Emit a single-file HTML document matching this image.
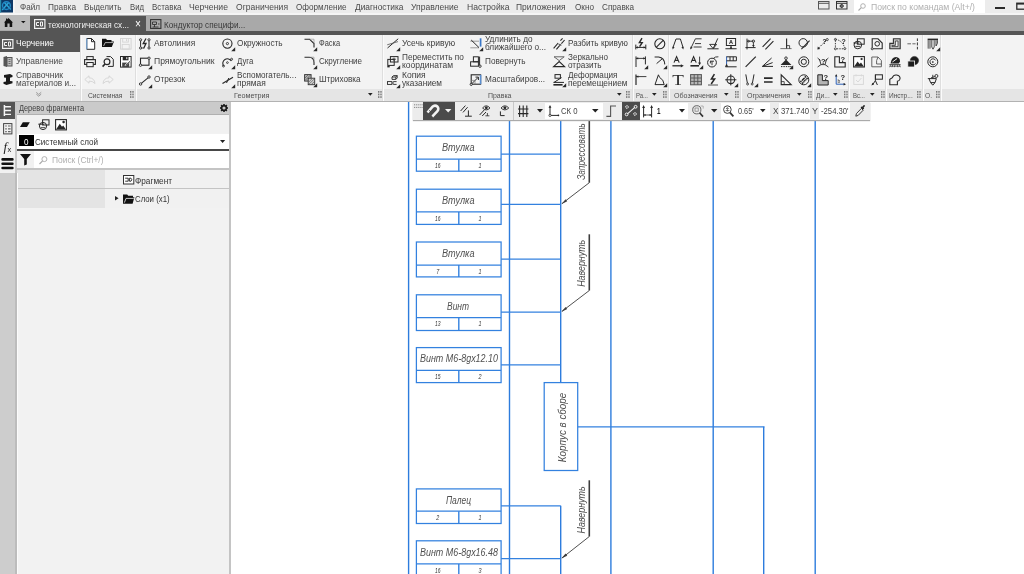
<!DOCTYPE html><html lang="ru"><head><meta charset="utf-8"><title>КОМПАС-3D</title><style>html,body{margin:0;padding:0;}body{width:1024px;height:574px;position:relative;overflow:hidden;background:#fff;font-family:"Liberation Sans", sans-serif;}div,span.t,svg{position:absolute;}span.t{white-space:nowrap;transform-origin:0 0;line-height:1;}svg{overflow:visible;}</style></head><body>
<div style="left:0px;top:0px;width:1024px;height:15px;background:#ececec;"></div>
<div style="left:0px;top:13px;width:1024px;height:2px;background:#f5f5f5;"></div>
<div style="left:0px;top:15px;width:1024px;height:16px;background:#a9a9a9;"></div>
<div style="left:0px;top:15px;width:30px;height:15.2px;background:#bababa;"></div>
<div style="left:30px;top:16px;width:116px;height:15px;background:#555555;"></div>
<div style="left:0px;top:31px;width:1024px;height:4px;background:#555555;"></div>
<div style="left:0px;top:35px;width:1024px;height:53.5px;background:#f3f3f3;"></div>
<div style="left:0px;top:88.5px;width:1024px;height:12.5px;background:#e5e5e5;"></div>
<div style="left:0px;top:35px;width:80px;height:17px;background:#555555;"></div>
<div style="left:0px;top:100.6px;width:1024px;height:1.2px;background:#b2b2b2;"></div>
<div style="left:79.5px;top:35px;width:1px;height:65.5px;background:#dedede;"></div>
<div style="left:80.5px;top:35px;width:1px;height:65.5px;background:#fbfbfb;"></div>
<div style="left:134.6px;top:35px;width:1px;height:65.5px;background:#dedede;"></div>
<div style="left:135.6px;top:35px;width:1px;height:65.5px;background:#fbfbfb;"></div>
<div style="left:382px;top:35px;width:1px;height:65.5px;background:#dedede;"></div>
<div style="left:383px;top:35px;width:1px;height:65.5px;background:#fbfbfb;"></div>
<div style="left:631.5px;top:35px;width:1px;height:65.5px;background:#dedede;"></div>
<div style="left:632.5px;top:35px;width:1px;height:65.5px;background:#fbfbfb;"></div>
<div style="left:667.8px;top:35px;width:1px;height:65.5px;background:#dedede;"></div>
<div style="left:668.8px;top:35px;width:1px;height:65.5px;background:#fbfbfb;"></div>
<div style="left:739.5px;top:35px;width:1px;height:65.5px;background:#dedede;"></div>
<div style="left:740.5px;top:35px;width:1px;height:65.5px;background:#fbfbfb;"></div>
<div style="left:811.5px;top:35px;width:1px;height:65.5px;background:#dedede;"></div>
<div style="left:812.5px;top:35px;width:1px;height:65.5px;background:#fbfbfb;"></div>
<div style="left:848.2px;top:35px;width:1px;height:65.5px;background:#dedede;"></div>
<div style="left:849.2px;top:35px;width:1px;height:65.5px;background:#fbfbfb;"></div>
<div style="left:885px;top:35px;width:1px;height:65.5px;background:#dedede;"></div>
<div style="left:886px;top:35px;width:1px;height:65.5px;background:#fbfbfb;"></div>
<div style="left:921.5px;top:35px;width:1px;height:65.5px;background:#dedede;"></div>
<div style="left:922.5px;top:35px;width:1px;height:65.5px;background:#fbfbfb;"></div>
<div style="left:940px;top:35px;width:1px;height:65.5px;background:#dedede;"></div>
<div style="left:941px;top:35px;width:1px;height:65.5px;background:#fbfbfb;"></div>
<div style="left:854px;top:0px;width:130.5px;height:12.7px;background:#ffffff;"></div>
<div style="left:231px;top:101.5px;width:793px;height:472.5px;background:#ffffff;"></div>
<div style="left:0px;top:101.5px;width:16px;height:71.5px;background:#f1f1f1;"></div>
<div style="left:0px;top:173px;width:16px;height:401px;background:#cdcdcd;"></div>
<div style="left:0px;top:101.5px;width:16px;height:17px;background:#555555;"></div>
<div style="left:16px;top:101.5px;width:214px;height:472.5px;background:#f2f2f2;"></div>
<div style="left:16px;top:101.5px;width:214px;height:12.7px;background:#cacaca;"></div>
<div style="left:16px;top:114px;width:214px;height:1.2px;background:#b0b0b0;"></div>
<div style="left:16px;top:115.2px;width:214px;height:18.3px;background:#f1f1f1;"></div>
<div style="left:16px;top:133.5px;width:214px;height:15px;background:#ffffff;"></div>
<div style="left:18.5px;top:135px;width:15px;height:10.6px;background:#000000;"></div>
<div style="left:16px;top:148.5px;width:214px;height:2px;background:#484848;"></div>
<div style="left:16px;top:150.5px;width:214px;height:17.5px;background:#ffffff;"></div>
<div style="left:16px;top:150.5px;width:17.5px;height:17.5px;background:#f1f1f1;"></div>
<div style="left:16px;top:168px;width:214px;height:1.5px;background:#c4c4c4;"></div>
<div style="left:16px;top:169.5px;width:214px;height:18px;background:#f1f1f1;"></div>
<div style="left:16px;top:169.5px;width:89px;height:18px;background:#e4e4e4;"></div>
<div style="left:16px;top:187.5px;width:214px;height:1.5px;background:#c4c4c4;"></div>
<div style="left:16px;top:189px;width:214px;height:18.5px;background:#f1f1f1;"></div>
<div style="left:16px;top:189px;width:89px;height:18.5px;background:#e4e4e4;"></div>
<div style="left:15.4px;top:101.5px;width:1.2px;height:71.5px;background:#c8c8c8;"></div>
<div style="left:15px;top:173px;width:2px;height:401px;background:#bcbcbc;"></div>
<div style="left:17px;top:173px;width:1px;height:401px;background:#fbfbfb;"></div>
<div style="left:229.3px;top:101.5px;width:1.5px;height:472.5px;background:#c4c4c4;"></div>
<div style="left:13px;top:0px;width:1.5px;height:13px;background:#f4f4f4;"></div>
<div style="left:995px;top:7px;width:9.5px;height:1.6px;background:#2a2a2a;"></div>
<svg style="left:0;top:0;will-change:transform" width="1024" height="574" viewBox="0 0 1024 574" font-family="Liberation Sans, sans-serif"><line x1="408.6" y1="102" x2="408.6" y2="574" stroke="#2d7cdd" stroke-width="1.4"/><line x1="509.5" y1="102" x2="509.5" y2="574" stroke="#2d7cdd" stroke-width="1.4"/><line x1="610.9" y1="102" x2="610.9" y2="574" stroke="#2d7cdd" stroke-width="1.4"/><line x1="713.2" y1="102" x2="713.2" y2="574" stroke="#2d7cdd" stroke-width="1.4"/><line x1="815.2" y1="102" x2="815.2" y2="574" stroke="#2d7cdd" stroke-width="1.4"/><line x1="560.7" y1="102" x2="560.7" y2="382.6" stroke="#2d7cdd" stroke-width="1.4"/><line x1="560.7" y1="505.8" x2="560.7" y2="574" stroke="#2d7cdd" stroke-width="1.4"/><line x1="763.7" y1="426.8" x2="763.7" y2="574" stroke="#2d7cdd" stroke-width="1.4"/><line x1="577.7" y1="426.8" x2="764.5" y2="426.8" stroke="#3381df" stroke-width="1.25"/><rect x="416.4" y="136.2" width="84.7" height="35.0" fill="none" stroke="#3381df" stroke-width="1.25"/><line x1="416.4" y1="159.2" x2="501.1" y2="159.2" stroke="#3381df" stroke-width="1.25"/><line x1="458.8" y1="159.2" x2="458.8" y2="171.2" stroke="#3381df" stroke-width="1.4"/><line x1="501.1" y1="154.0" x2="560.7" y2="154.0" stroke="#3381df" stroke-width="1.25"/><text x="442" y="150.89999999999998" font-size="11" font-style="italic" fill="#505050" textLength="32.5" lengthAdjust="spacingAndGlyphs">Втулка</text><text x="435.05" y="168.0" font-size="8" font-style="italic" fill="#333" textLength="5.5" lengthAdjust="spacingAndGlyphs">16</text><text x="478.6" y="168.0" font-size="8" font-style="italic" fill="#333" textLength="3" lengthAdjust="spacingAndGlyphs">1</text><rect x="416.4" y="189.2" width="84.7" height="35.20000000000002" fill="none" stroke="#3381df" stroke-width="1.25"/><line x1="416.4" y1="211.9" x2="501.1" y2="211.9" stroke="#3381df" stroke-width="1.25"/><line x1="458.8" y1="211.9" x2="458.8" y2="224.4" stroke="#3381df" stroke-width="1.4"/><line x1="501.1" y1="204.4" x2="560.7" y2="204.4" stroke="#3381df" stroke-width="1.25"/><text x="442" y="203.89999999999998" font-size="11" font-style="italic" fill="#505050" textLength="32.5" lengthAdjust="spacingAndGlyphs">Втулка</text><text x="435.05" y="220.70000000000002" font-size="8" font-style="italic" fill="#333" textLength="5.5" lengthAdjust="spacingAndGlyphs">16</text><text x="478.6" y="220.70000000000002" font-size="8" font-style="italic" fill="#333" textLength="3" lengthAdjust="spacingAndGlyphs">1</text><rect x="416.4" y="242.0" width="84.7" height="34.89999999999998" fill="none" stroke="#3381df" stroke-width="1.25"/><line x1="416.4" y1="265.0" x2="501.1" y2="265.0" stroke="#3381df" stroke-width="1.25"/><line x1="458.8" y1="265.0" x2="458.8" y2="276.9" stroke="#3381df" stroke-width="1.4"/><line x1="501.1" y1="259.2" x2="560.7" y2="259.2" stroke="#3381df" stroke-width="1.25"/><text x="442" y="256.7" font-size="11" font-style="italic" fill="#505050" textLength="32.5" lengthAdjust="spacingAndGlyphs">Втулка</text><text x="436.3" y="273.8" font-size="8" font-style="italic" fill="#333" textLength="3" lengthAdjust="spacingAndGlyphs">7</text><text x="478.6" y="273.8" font-size="8" font-style="italic" fill="#333" textLength="3" lengthAdjust="spacingAndGlyphs">1</text><rect x="416.4" y="294.8" width="84.7" height="35.69999999999999" fill="none" stroke="#3381df" stroke-width="1.25"/><line x1="416.4" y1="317.5" x2="501.1" y2="317.5" stroke="#3381df" stroke-width="1.25"/><line x1="458.8" y1="317.5" x2="458.8" y2="330.5" stroke="#3381df" stroke-width="1.4"/><line x1="501.1" y1="312.1" x2="560.7" y2="312.1" stroke="#3381df" stroke-width="1.25"/><text x="447" y="309.5" font-size="11" font-style="italic" fill="#505050" textLength="22" lengthAdjust="spacingAndGlyphs">Винт</text><text x="435.05" y="326.3" font-size="8" font-style="italic" fill="#333" textLength="5.5" lengthAdjust="spacingAndGlyphs">13</text><text x="478.6" y="326.3" font-size="8" font-style="italic" fill="#333" textLength="3" lengthAdjust="spacingAndGlyphs">1</text><rect x="416.4" y="347.6" width="84.7" height="35.0" fill="none" stroke="#3381df" stroke-width="1.25"/><line x1="416.4" y1="370.3" x2="501.1" y2="370.3" stroke="#3381df" stroke-width="1.25"/><line x1="458.8" y1="370.3" x2="458.8" y2="382.6" stroke="#3381df" stroke-width="1.4"/><line x1="501.1" y1="364.9" x2="560.7" y2="364.9" stroke="#3381df" stroke-width="1.25"/><text x="420" y="362.3" font-size="11" font-style="italic" fill="#505050" textLength="78" lengthAdjust="spacingAndGlyphs">Винт М6-8gх12.10</text><text x="435.05" y="379.1" font-size="8" font-style="italic" fill="#333" textLength="5.5" lengthAdjust="spacingAndGlyphs">15</text><text x="478.6" y="379.1" font-size="8" font-style="italic" fill="#333" textLength="3" lengthAdjust="spacingAndGlyphs">2</text><rect x="416.4" y="488.9" width="84.7" height="34.60000000000002" fill="none" stroke="#3381df" stroke-width="1.25"/><line x1="416.4" y1="511.2" x2="501.1" y2="511.2" stroke="#3381df" stroke-width="1.25"/><line x1="458.8" y1="511.2" x2="458.8" y2="523.5" stroke="#3381df" stroke-width="1.4"/><line x1="501.1" y1="505.8" x2="560.7" y2="505.8" stroke="#3381df" stroke-width="1.25"/><text x="446" y="503.59999999999997" font-size="11" font-style="italic" fill="#505050" textLength="25" lengthAdjust="spacingAndGlyphs">Палец</text><text x="436.3" y="520.0" font-size="8" font-style="italic" fill="#333" textLength="3" lengthAdjust="spacingAndGlyphs">2</text><text x="478.6" y="520.0" font-size="8" font-style="italic" fill="#333" textLength="3" lengthAdjust="spacingAndGlyphs">1</text><rect x="416.4" y="540.8" width="84.7" height="39.200000000000045" fill="none" stroke="#3381df" stroke-width="1.25"/><line x1="416.4" y1="563.9" x2="501.1" y2="563.9" stroke="#3381df" stroke-width="1.25"/><line x1="458.8" y1="563.9" x2="458.8" y2="580" stroke="#3381df" stroke-width="1.4"/><line x1="501.1" y1="558.7" x2="560.7" y2="558.7" stroke="#3381df" stroke-width="1.25"/><text x="420" y="555.5" font-size="11" font-style="italic" fill="#505050" textLength="78" lengthAdjust="spacingAndGlyphs">Винт М6-8gх16.48</text><text x="435.05" y="572.6999999999999" font-size="8" font-style="italic" fill="#333" textLength="5.5" lengthAdjust="spacingAndGlyphs">16</text><text x="478.6" y="572.6999999999999" font-size="8" font-style="italic" fill="#333" textLength="3" lengthAdjust="spacingAndGlyphs">3</text><rect x="544.2" y="382.6" width="33.5" height="87.9" fill="#fff" stroke="#3381df" stroke-width="1.25"/><text transform="translate(566,462.2) rotate(-90)" font-size="11.5" font-style="italic" fill="#505050" textLength="69.5" lengthAdjust="spacingAndGlyphs">Корпус в сборе</text><line x1="589.3" y1="102" x2="589.3" y2="182.7" stroke="#3c3c3c" stroke-width="1.6"/><line x1="589.3" y1="182.7" x2="562" y2="203.6" stroke="#3c3c3c" stroke-width="0.9"/><path d="M561.3 204.2 L567.2 201.29999999999998 L565.6 199.2 Z" fill="#3c3c3c"/><text transform="translate(585.2,179.8) rotate(-90)" font-size="11.5" font-style="italic" fill="#505050" textLength="56.5" lengthAdjust="spacingAndGlyphs">Запрессовать</text><line x1="589.3" y1="234.3" x2="589.3" y2="290.5" stroke="#3c3c3c" stroke-width="1.6"/><line x1="589.3" y1="290.5" x2="562" y2="311.3" stroke="#3c3c3c" stroke-width="0.9"/><path d="M561.3 311.90000000000003 L567.2 309.0 L565.6 306.90000000000003 Z" fill="#3c3c3c"/><text transform="translate(585.2,286.8) rotate(-90)" font-size="11.5" font-style="italic" fill="#505050" textLength="47" lengthAdjust="spacingAndGlyphs">Навернуть</text><line x1="589.3" y1="480.3" x2="589.3" y2="536.5" stroke="#3c3c3c" stroke-width="1.6"/><line x1="589.3" y1="536.5" x2="562" y2="558.0" stroke="#3c3c3c" stroke-width="0.9"/><path d="M561.3 558.6 L567.2 555.7 L565.6 553.6 Z" fill="#3c3c3c"/><text transform="translate(585.2,533.4) rotate(-90)" font-size="11.5" font-style="italic" fill="#505050" textLength="47" lengthAdjust="spacingAndGlyphs">Навернуть</text></svg>
<div style="left:412.5px;top:101.5px;width:457.5px;height:18px;background:#ececec;box-shadow:0 1px 1px #aaa;"></div>
<div style="left:423px;top:101.5px;width:32px;height:18px;background:#4b4b4b;"></div>
<div style="left:512.5px;top:101.5px;width:1px;height:18px;background:#c8c8c8;"></div>
<div style="left:545px;top:102.5px;width:57.5px;height:16px;background:#ffffff;"></div>
<div style="left:622px;top:101.5px;width:18px;height:18px;background:#4b4b4b;"></div>
<div style="left:640px;top:102.5px;width:48px;height:16px;background:#ffffff;"></div>
<div style="left:721px;top:102.5px;width:49px;height:16px;background:#ffffff;"></div>
<div style="left:779px;top:102.5px;width:31px;height:16px;background:#ffffff;"></div>
<div style="left:819px;top:102.5px;width:31px;height:16px;background:#ffffff;"></div>
<svg style="left:413.5px;top:104px" width="9" height="5" viewBox="0 0 9 5"><path d="M0 0.8 H9 M0 3.4 H9" stroke="#777" stroke-width="0.9" fill="none" stroke-dasharray="1.2 0.9"/></svg>
<svg style="left:425.5px;top:104px" width="13" height="13.5" viewBox="0 0 13 13.5"><path d="M1.5 8.5 L6.6 2.6 A3.3 3.3 0 0 1 11.4 7.2 L6.2 12.6" stroke="#f4f4f4" stroke-width="2.6" fill="none" /><path d="M3.2 6.4 L5.6 8.4 M3.6 10.6 L6.4 12.8" stroke="#4b4b4b" stroke-width="1.0" fill="none" /><path d="M4.6 9.6 L8.4 5.4" stroke="#4b4b4b" stroke-width="1.2" fill="none" /></svg>
<svg style="left:445px;top:108.6px" width="6.4" height="3.4" viewBox="0 0 6.4 3.4"><path d="M0 0 H6.4 L3.2 3.4 Z" fill="#f4f4f4"/></svg>
<svg style="left:460px;top:104.5px" width="12.5" height="12.5" viewBox="0 0 12.5 12.5"><path d="M0.6 6 L5.4 0.6 M3 7.4 L7.6 2.2" stroke="#282828" stroke-width="1.0" fill="none" /><path d="M8.4 5.4 V11 M5 11.2 H11.8" stroke="#282828" stroke-width="1.0" fill="none" /></svg>
<svg style="left:479px;top:104px" width="12" height="13" viewBox="0 0 12 13"><path d="M0.6 11 L5.6 5.6 M3.2 12 L7 8" stroke="#282828" stroke-width="1.0" fill="none" /><path d="M3.6 4 Q7.2 -0.4 11 4 Q7.2 7.8 3.6 4 Z" stroke="#282828" stroke-width="0.9" fill="none" /><circle cx="7.3" cy="3.8" r="1.4" stroke="#282828" stroke-width="0.1" fill="#282828"/><path d="M6.4 11.8 H10.4 M8.4 9 V11.8" stroke="#282828" stroke-width="0.8" fill="none" /></svg>
<svg style="left:498.5px;top:104px" width="11" height="13" viewBox="0 0 11 13"><path d="M2 4 Q5.8 -0.4 9.8 4 Q5.8 7.8 2 4 Z" stroke="#282828" stroke-width="0.9" fill="none" /><circle cx="5.9" cy="3.8" r="1.4" stroke="#282828" stroke-width="0.1" fill="#282828"/><path d="M1.4 7.4 V11.6 H5.6" stroke="#282828" stroke-width="1.0" fill="none" /></svg>
<svg style="left:518px;top:104.5px" width="10.5" height="12.5" viewBox="0 0 10.5 12.5"><path d="M1.6 0.4 V12 M5.2 0.4 V12 M8.8 0.4 V12 M0 4 H10.4 M0 8.6 H10.4" stroke="#282828" stroke-width="1.1" fill="none" /></svg>
<svg style="left:537px;top:109px" width="6" height="3.4" viewBox="0 0 6 3.4"><path d="M0 0 H6 L3 3.4 Z" fill="#222"/></svg>
<svg style="left:548px;top:104.5px" width="11.5" height="12.5" viewBox="0 0 11.5 12.5"><path d="M2 1.6 V10.4 H10" stroke="#282828" stroke-width="1.0" fill="none" /><path d="M2 0 L0.6 2.8 H3.4 Z" fill="#282828"/><circle cx="2" cy="10.4" r="1.1" stroke="#282828" stroke-width="0.8" fill="#fff"/><circle cx="10.4" cy="10.4" r="0.8" stroke="#282828" stroke-width="0.1" fill="#282828"/></svg>
<svg style="left:592px;top:109px" width="6.6" height="3.6" viewBox="0 0 6.6 3.6"><path d="M0 0 H6.6 L3.3 3.6 Z" fill="#222"/></svg>
<svg style="left:606px;top:104.5px" width="10.5" height="12.5" viewBox="0 0 10.5 12.5"><path d="M0.4 11.4 H4.6 V1 H10" stroke="#555" stroke-width="1.1" fill="none" /></svg>
<svg style="left:624px;top:104px" width="14.5" height="13" viewBox="0 0 14.5 13"><path d="M3.4 9.8 L10.8 3.4" stroke="#f4f4f4" stroke-width="1.1" fill="none" /><circle cx="2.6" cy="10.4" r="1.4" stroke="#f4f4f4" stroke-width="1.0" fill="none"/><circle cx="11.6" cy="2.8" r="1.4" stroke="#f4f4f4" stroke-width="1.0" fill="none"/><path d="M3 1.4 L4.6 3 L3 4.6 L1.4 3 Z M11 8.4 L12.6 10 L11 11.6 L9.4 10 Z" stroke="#f4f4f4" stroke-width="0.9" fill="none" /></svg>
<svg style="left:642px;top:104.5px" width="11.5" height="13" viewBox="0 0 11.5 13"><path d="M1.6 2 V12.4 M9.6 2 V12.4" stroke="#282828" stroke-width="1.0" fill="none" /><path d="M1.6 0 L0.2 3 H3 Z M9.6 0 L8.2 3 H11 Z" fill="#282828"/><path d="M1.6 10 H9.6" stroke="#282828" stroke-width="0.8" fill="none" /><path d="M1.6 10 L3.6 9 V11 Z M9.6 10 L7.6 9 V11 Z" fill="#282828"/></svg>
<svg style="left:678.8px;top:109px" width="6" height="3.4" viewBox="0 0 6 3.4"><path d="M0 0 H6 L3 3.4 Z" fill="#222"/></svg>
<svg style="left:692px;top:104.5px" width="12" height="12.5" viewBox="0 0 12 12.5"><circle cx="4.8" cy="4.8" r="4.1" stroke="#555" stroke-width="0.9" fill="none"/><path d="M7.6 7.8 L11 11.6" stroke="#333" stroke-width="1.7" fill="none" /><rect x="3" y="3" width="3.2" height="3.2" stroke="#777" stroke-width="0.7" fill="none"/><path d="M8.6 1 h2.6 v2.6" stroke="#999" stroke-width="0.7" fill="none" /></svg>
<svg style="left:711px;top:109px" width="6.4" height="3.4" viewBox="0 0 6.4 3.4"><path d="M0 0 H6.4 L3.2 3.4 Z" fill="#222"/></svg>
<svg style="left:722.5px;top:104.5px" width="11" height="12.5" viewBox="0 0 11 12.5"><circle cx="4.4" cy="4.6" r="3.8" stroke="#444" stroke-width="1.0" fill="none"/><path d="M7 7.6 L10.4 11.4" stroke="#333" stroke-width="1.7" fill="none" /><path d="M2.6 5.6 H6.4 M4.4 2.6 V6.4 M3 4 L4.4 2.6 L5.8 4" stroke="#444" stroke-width="0.7" fill="none" /></svg>
<svg style="left:760.4px;top:109px" width="5.6" height="3.2" viewBox="0 0 5.6 3.2"><path d="M0 0 H5.6 L2.8 3.2 Z" fill="#222"/></svg>
<svg style="left:855px;top:104px" width="10.5" height="13" viewBox="0 0 10.5 13"><path d="M0.8 12.2 L1.4 9.6 L6.4 4.4 L8.2 6.2 L3.2 11.4 Z" stroke="#282828" stroke-width="0.9" fill="none" /><path d="M5.6 3.6 L7 2.2 L7.6 2.8 Q8.2 0.4 9.6 1 Q10.6 2.2 8.6 3.8 L9.2 4.4 L7.8 5.8 Z" fill="#282828"/></svg>
<div id="txt" style="left:0;top:0;width:1024px;height:574px;will-change:transform;"><svg style="left:0px;top:0px;" width="13" height="12.5" viewBox="0 0 13 12.5"><rect width="13" height="12.5" fill="#0d3866"/><rect width="1.2" height="12.5" fill="#2a8fb0"/><path d="M2.2 10 L8.8 2.4 M4.4 2.6 L10.8 9.6" stroke="#2ba3d6" stroke-width="1.5" fill="none" /><circle cx="6.4" cy="5.6" r="3.9" stroke="#2288c4" stroke-width="1.4" fill="none"/></svg>
<svg style="left:3.5px;top:18.2px;" width="9" height="9" viewBox="0 0 9 9"><path d="M0 4.5 L2 2.2 L2 0.6 L3.2 0.6 L3.2 1.4 L4.5 0 L9 4.5 L8.2 4.5 L8.2 9 L5.6 9 L5.6 5.6 L3.4 5.6 L3.4 9 L0.8 9 L0.8 4.5 Z" fill="#151515"/></svg>
<svg style="left:21px;top:21.2px;" width="4.6" height="2.4" viewBox="0 0 4.6 2.4"><path d="M0 0 L4.6 0 L2.3 2.3 Z" fill="#151515"/></svg>
<svg style="left:34px;top:18.8px;" width="11.5" height="10" viewBox="0 0 11.5 10"><rect x="0.6" y="0.6" width="10.3" height="8.8" stroke="#f2f2f2" stroke-width="1.2" fill="none"/><path d="M2.5 3.5 h2.5 M2.5 6.5 h2.5 M2.5 3.5 v3 M6.5 3 v4 M8.5 3 v4 M6.5 3 h2 M6.5 7 h2" stroke="#f2f2f2" stroke-width="1.0" fill="none" /></svg>
<svg style="left:150px;top:18.8px;" width="11.5" height="10" viewBox="0 0 11.5 10"><rect x="0.6" y="0.6" width="10.3" height="8.8" stroke="#333" stroke-width="1.1" fill="none"/><path d="M2.5 3 h4 v2.5 h-4 z M4.5 5.5 v2.5 M2.5 8 h6 M8 5 h1.5" stroke="#333" stroke-width="0.9" fill="none" /></svg>
<svg style="left:1.5px;top:39px;" width="11.5" height="10" viewBox="0 0 11.5 10"><rect x="0.6" y="0.6" width="10.3" height="8.8" stroke="#f2f2f2" stroke-width="1.2" fill="none"/><path d="M2.5 3.5 h2.5 M2.5 6.5 h2.5 M2.5 3.5 v3 M6.5 3 v4 M8.5 3 v4 M6.5 3 h2 M6.5 7 h2" stroke="#f2f2f2" stroke-width="1.0" fill="none" /></svg>
<svg style="left:2.6px;top:56px;" width="10" height="11" viewBox="0 0 10 11"><path d="M0.5 1 L4 0 L4 11 L0.5 10 Z" fill="#555"/><rect x="4" y="1.5" width="5" height="8.5" stroke="#555" stroke-width="1" fill="#bbb"/><path d="M5.5 3.5 h2 M5.5 5.5 h2 M5.5 7.5 h2" stroke="#555" stroke-width="0.8" fill="none" /></svg>
<svg style="left:2.6px;top:73.7px;" width="10" height="11" viewBox="0 0 10 11"><path d="M1 1 L7 0 L9.5 1.2 L9.5 3 L7 3.8 L7 7 L9.5 7.2 L9.5 9.2 L3.5 11 L0.5 9.8 L0.5 8 L3 7.4 L3 3.8 L1 3.4 Z" fill="#1a1a1a"/></svg>
<svg style="left:36px;top:92px;" width="5.5" height="4.5" viewBox="0 0 5.5 4.5"><path d="M0.3 0.3 L2.7 2.4 L5.2 0.3 M0.3 2.1 L2.7 4.2 L5.2 2.1" stroke="#888" stroke-width="0.8" fill="none" /></svg>
<svg style="left:818px;top:1.3px;" width="11.5" height="8.5" viewBox="0 0 11.5 8.5"><rect x="0.5" y="0.5" width="10.5" height="7.5" stroke="#555" stroke-width="1" fill="none"/><path d="M0.5 2.3 h10.5" stroke="#555" stroke-width="1" fill="none" /></svg>
<svg style="left:835.7px;top:1.3px;" width="11.5" height="8.5" viewBox="0 0 11.5 8.5"><rect x="0.5" y="0.5" width="10.5" height="7.5" stroke="#333" stroke-width="1" fill="none"/><path d="M0.5 2.3 h10.5" stroke="#333" stroke-width="1" fill="none" /><circle cx="5.7" cy="5" r="1.5" stroke="#333" stroke-width="1" fill="none"/><path d="M5.7 2.8 v4.4 M3.5 5 h4.4" stroke="#333" stroke-width="0.7" fill="none" /></svg>
<svg style="left:858px;top:2.5px;" width="8" height="8" viewBox="0 0 8 8"><circle cx="5" cy="3" r="2.3" stroke="#aaa" stroke-width="0.9" fill="none"/><path d="M3.3 4.7 L0.5 7.5" stroke="#aaa" stroke-width="1.1" fill="none" /></svg>
<svg style="left:1015.5px;top:1.5px;" width="9" height="8" viewBox="0 0 9 8"><rect x="0.8" y="1.2" width="9" height="6" stroke="#2a2a2a" stroke-width="1.3" fill="none"/><path d="M0.8 1.8 h9" stroke="#2a2a2a" stroke-width="1.6" fill="none" /></svg>
<svg style="left:130.2px;top:91.3px;" width="3.8" height="7" viewBox="0 0 3.8 7"><rect x="0" y="0.0" width="1.4" height="1.7" fill="#7a7a7a"/><rect x="2.3" y="0.0" width="1.4" height="1.7" fill="#7a7a7a"/><rect x="0" y="2.6" width="1.4" height="1.7" fill="#7a7a7a"/><rect x="2.3" y="2.6" width="1.4" height="1.7" fill="#7a7a7a"/><rect x="0" y="5.2" width="1.4" height="1.7" fill="#7a7a7a"/><rect x="2.3" y="5.2" width="1.4" height="1.7" fill="#7a7a7a"/></svg>
<svg style="left:377.5px;top:91.3px;" width="3.8" height="7" viewBox="0 0 3.8 7"><rect x="0" y="0.0" width="1.4" height="1.7" fill="#7a7a7a"/><rect x="2.3" y="0.0" width="1.4" height="1.7" fill="#7a7a7a"/><rect x="0" y="2.6" width="1.4" height="1.7" fill="#7a7a7a"/><rect x="2.3" y="2.6" width="1.4" height="1.7" fill="#7a7a7a"/><rect x="0" y="5.2" width="1.4" height="1.7" fill="#7a7a7a"/><rect x="2.3" y="5.2" width="1.4" height="1.7" fill="#7a7a7a"/></svg>
<svg style="left:626px;top:91.3px;" width="3.8" height="7" viewBox="0 0 3.8 7"><rect x="0" y="0.0" width="1.4" height="1.7" fill="#7a7a7a"/><rect x="2.3" y="0.0" width="1.4" height="1.7" fill="#7a7a7a"/><rect x="0" y="2.6" width="1.4" height="1.7" fill="#7a7a7a"/><rect x="2.3" y="2.6" width="1.4" height="1.7" fill="#7a7a7a"/><rect x="0" y="5.2" width="1.4" height="1.7" fill="#7a7a7a"/><rect x="2.3" y="5.2" width="1.4" height="1.7" fill="#7a7a7a"/></svg>
<svg style="left:663.3px;top:91.3px;" width="3.8" height="7" viewBox="0 0 3.8 7"><rect x="0" y="0.0" width="1.4" height="1.7" fill="#7a7a7a"/><rect x="2.3" y="0.0" width="1.4" height="1.7" fill="#7a7a7a"/><rect x="0" y="2.6" width="1.4" height="1.7" fill="#7a7a7a"/><rect x="2.3" y="2.6" width="1.4" height="1.7" fill="#7a7a7a"/><rect x="0" y="5.2" width="1.4" height="1.7" fill="#7a7a7a"/><rect x="2.3" y="5.2" width="1.4" height="1.7" fill="#7a7a7a"/></svg>
<svg style="left:735px;top:91.3px;" width="3.8" height="7" viewBox="0 0 3.8 7"><rect x="0" y="0.0" width="1.4" height="1.7" fill="#7a7a7a"/><rect x="2.3" y="0.0" width="1.4" height="1.7" fill="#7a7a7a"/><rect x="0" y="2.6" width="1.4" height="1.7" fill="#7a7a7a"/><rect x="2.3" y="2.6" width="1.4" height="1.7" fill="#7a7a7a"/><rect x="0" y="5.2" width="1.4" height="1.7" fill="#7a7a7a"/><rect x="2.3" y="5.2" width="1.4" height="1.7" fill="#7a7a7a"/></svg>
<svg style="left:807.7px;top:91.3px;" width="3.8" height="7" viewBox="0 0 3.8 7"><rect x="0" y="0.0" width="1.4" height="1.7" fill="#7a7a7a"/><rect x="2.3" y="0.0" width="1.4" height="1.7" fill="#7a7a7a"/><rect x="0" y="2.6" width="1.4" height="1.7" fill="#7a7a7a"/><rect x="2.3" y="2.6" width="1.4" height="1.7" fill="#7a7a7a"/><rect x="0" y="5.2" width="1.4" height="1.7" fill="#7a7a7a"/><rect x="2.3" y="5.2" width="1.4" height="1.7" fill="#7a7a7a"/></svg>
<svg style="left:843.8px;top:91.3px;" width="3.8" height="7" viewBox="0 0 3.8 7"><rect x="0" y="0.0" width="1.4" height="1.7" fill="#7a7a7a"/><rect x="2.3" y="0.0" width="1.4" height="1.7" fill="#7a7a7a"/><rect x="0" y="2.6" width="1.4" height="1.7" fill="#7a7a7a"/><rect x="2.3" y="2.6" width="1.4" height="1.7" fill="#7a7a7a"/><rect x="0" y="5.2" width="1.4" height="1.7" fill="#7a7a7a"/><rect x="2.3" y="5.2" width="1.4" height="1.7" fill="#7a7a7a"/></svg>
<svg style="left:881px;top:91.3px;" width="3.8" height="7" viewBox="0 0 3.8 7"><rect x="0" y="0.0" width="1.4" height="1.7" fill="#7a7a7a"/><rect x="2.3" y="0.0" width="1.4" height="1.7" fill="#7a7a7a"/><rect x="0" y="2.6" width="1.4" height="1.7" fill="#7a7a7a"/><rect x="2.3" y="2.6" width="1.4" height="1.7" fill="#7a7a7a"/><rect x="0" y="5.2" width="1.4" height="1.7" fill="#7a7a7a"/><rect x="2.3" y="5.2" width="1.4" height="1.7" fill="#7a7a7a"/></svg>
<svg style="left:917px;top:91.3px;" width="3.8" height="7" viewBox="0 0 3.8 7"><rect x="0" y="0.0" width="1.4" height="1.7" fill="#7a7a7a"/><rect x="2.3" y="0.0" width="1.4" height="1.7" fill="#7a7a7a"/><rect x="0" y="2.6" width="1.4" height="1.7" fill="#7a7a7a"/><rect x="2.3" y="2.6" width="1.4" height="1.7" fill="#7a7a7a"/><rect x="0" y="5.2" width="1.4" height="1.7" fill="#7a7a7a"/><rect x="2.3" y="5.2" width="1.4" height="1.7" fill="#7a7a7a"/></svg>
<svg style="left:935.5px;top:91.3px;" width="3.8" height="7" viewBox="0 0 3.8 7"><rect x="0" y="0.0" width="1.4" height="1.7" fill="#7a7a7a"/><rect x="2.3" y="0.0" width="1.4" height="1.7" fill="#7a7a7a"/><rect x="0" y="2.6" width="1.4" height="1.7" fill="#7a7a7a"/><rect x="2.3" y="2.6" width="1.4" height="1.7" fill="#7a7a7a"/><rect x="0" y="5.2" width="1.4" height="1.7" fill="#7a7a7a"/><rect x="2.3" y="5.2" width="1.4" height="1.7" fill="#7a7a7a"/></svg>
<svg style="left:368px;top:93.2px;" width="4.6" height="2.8" viewBox="0 0 4.6 2.8"><path d="M0 0 L4.6 0 L2.3 2.8 Z" fill="#222"/></svg>
<svg style="left:616.6px;top:93.2px;" width="4.6" height="2.8" viewBox="0 0 4.6 2.8"><path d="M0 0 L4.6 0 L2.3 2.8 Z" fill="#222"/></svg>
<svg style="left:652.2px;top:93.2px;" width="4.6" height="2.8" viewBox="0 0 4.6 2.8"><path d="M0 0 L4.6 0 L2.3 2.8 Z" fill="#222"/></svg>
<svg style="left:724.3px;top:93.2px;" width="4.6" height="2.8" viewBox="0 0 4.6 2.8"><path d="M0 0 L4.6 0 L2.3 2.8 Z" fill="#222"/></svg>
<svg style="left:797.3px;top:93.2px;" width="4.6" height="2.8" viewBox="0 0 4.6 2.8"><path d="M0 0 L4.6 0 L2.3 2.8 Z" fill="#222"/></svg>
<svg style="left:833px;top:93.2px;" width="4.6" height="2.8" viewBox="0 0 4.6 2.8"><path d="M0 0 L4.6 0 L2.3 2.8 Z" fill="#222"/></svg>
<svg style="left:870px;top:93.2px;" width="4.6" height="2.8" viewBox="0 0 4.6 2.8"><path d="M0 0 L4.6 0 L2.3 2.8 Z" fill="#222"/></svg>
<svg style="left:85.5px;top:37.5px;" width="12" height="12" viewBox="0 0 12 12"><path d="M0.8 0.5 L5.5 0.5 L8.7 3.7 L8.7 11.3 L0.8 11.3 Z" fill="#fff"/><path d="M0.8 0.5 L5.5 0.5 L8.7 3.7 L8.7 11.3 L0.8 11.3 Z M5.5 0.5 L5.5 3.7 L8.7 3.7" stroke="#282828" stroke-width="1.0" fill="none" /><path d="M0.8 0.5 V11.3" stroke="#7ab0e8" stroke-width="1" fill="none" /></svg>
<svg style="left:102px;top:38px;" width="12" height="12" viewBox="0 0 12 12"><path d="M0 0.8 L4 0.8 L5 2 L9.5 2 L9.5 3.6 L12 3.6 L9.8 9 L0 9 Z" fill="#111"/><path d="M1.6 8 L3.2 4.6 L11 4.6" stroke="#f3f3f3" stroke-width="0.7" fill="none" /></svg>
<svg style="left:120px;top:37.7px;" width="12" height="12" viewBox="0 0 12 12"><rect x="0.5" y="0.5" width="10.6" height="10.6" stroke="#d4d4d4" stroke-width="1" fill="none"/><rect x="2.7" y="0.5" width="5.6" height="3.6" stroke="#d4d4d4" stroke-width="0.9" fill="none"/><rect x="2.2" y="6.4" width="7" height="4.7" stroke="#d4d4d4" stroke-width="0.9" fill="none"/><path d="M6.5 1.2 v2" stroke="#d4d4d4" stroke-width="1" fill="none" /></svg>
<svg style="left:84px;top:55.8px;" width="12" height="12" viewBox="0 0 12 12"><rect x="0.6" y="3.6" width="10.8" height="4.8" stroke="#282828" stroke-width="1.1" fill="none"/><rect x="2.8" y="0.6" width="6.4" height="3" stroke="#282828" stroke-width="1.0" fill="none"/><rect x="2.8" y="6.5" width="6.4" height="4.2" stroke="#282828" stroke-width="1.0" fill="#f3f3f3"/></svg>
<svg style="left:102.3px;top:55.8px;" width="12" height="12" viewBox="0 0 12 12"><path d="M4.5 0.6 L8.6 0.6 L11.3 3.3 L11.3 10.4 L6 10.4" stroke="#282828" stroke-width="1.0" fill="none" /><circle cx="5" cy="5.8" r="2.9" stroke="#282828" stroke-width="1.2" fill="none"/><path d="M3 8 L0.6 10.6" stroke="#282828" stroke-width="1.6" fill="none" /></svg>
<svg style="left:120px;top:55.7px;" width="12" height="12" viewBox="0 0 12 12"><rect x="0.5" y="0.5" width="10.6" height="10.6" stroke="#282828" stroke-width="1.0" fill="#fff"/><path d="M2.7 0.5 h5.8 v3.8 h-5.8 z" fill="#282828"/><path d="M2.2 6.6 h7 v4.5 h-7 z" fill="#444"/><path d="M6.8 1.2 v2" stroke="#fff" stroke-width="1" fill="none" /><path d="M5 9.8 L10 5" stroke="#fff" stroke-width="1.5" fill="none" /><path d="M5.6 9.6 L10 5.4" stroke="#111" stroke-width="0.9" fill="none" /></svg>
<svg style="left:84px;top:75.0px;" width="12" height="12" viewBox="0 0 12 12"><path d="M0.8 4.5 L5 0.8 L5 2.8 Q10.5 3 11 8.5 Q8.5 5.8 5 6.2 L5 8.2 Z" stroke="#d4d4d4" stroke-width="0.9" fill="none" /></svg>
<svg style="left:102px;top:75.0px;" width="12" height="12" viewBox="0 0 12 12"><path d="M11.2 4.5 L7 0.8 L7 2.8 Q1.5 3 1 8.5 Q3.5 5.8 7 6.2 L7 8.2 Z" stroke="#d4d4d4" stroke-width="0.9" fill="none" /></svg>
<svg style="left:138.8px;top:38px;" width="12" height="12" viewBox="0 0 12 12"><circle cx="1.6" cy="1.8" r="1.1" stroke="#282828" stroke-width="0.9" fill="none"/><circle cx="1.6" cy="10" r="1.1" stroke="#282828" stroke-width="0.9" fill="none"/><circle cx="10" cy="1.8" r="1.1" stroke="#282828" stroke-width="0.9" fill="none"/><circle cx="10" cy="10" r="1.1" stroke="#282828" stroke-width="0.9" fill="none"/><path d="M1.6 2.9 V8.9 M10 2.9 V8.9" stroke="#282828" stroke-width="1.0" fill="none" /><path d="M7 0.5 L4.2 5.5 L7 5.5 L4.6 10.5" stroke="#282828" stroke-width="1.3" fill="none" /><path d="M2.6 10 h2" stroke="#282828" stroke-width="0.8" fill="none" /></svg>
<svg style="left:138.8px;top:56.0px;" width="12" height="12" viewBox="0 0 12 12"><rect x="1.5" y="2.2" width="8.5" height="7" stroke="#282828" stroke-width="1.1" fill="none"/><circle cx="1.5" cy="9.2" r="1.2" stroke="#282828" stroke-width="0.9" fill="#f3f3f3"/><circle cx="10" cy="2.2" r="1.2" stroke="#282828" stroke-width="0.9" fill="#f3f3f3"/><path d="M9.2 13.2 L13.2 13.2 L13.2 9.2 Z" fill="#282828"/></svg>
<svg style="left:138.8px;top:74.5px;" width="12" height="12" viewBox="0 0 12 12"><path d="M2 8.6 L9.6 2.4" stroke="#282828" stroke-width="1.1" fill="none" /><circle cx="1.6" cy="9" r="1.2" stroke="#282828" stroke-width="0.9" fill="#f3f3f3"/><circle cx="10" cy="2" r="1.2" stroke="#282828" stroke-width="0.9" fill="#f3f3f3"/><path d="M9.2 13.2 L13.2 13.2 L13.2 9.2 Z" fill="#282828"/></svg>
<svg style="left:221.6px;top:38px;" width="12" height="12" viewBox="0 0 12 12"><circle cx="5.4" cy="5.6" r="4.6" stroke="#282828" stroke-width="1.1" fill="none"/><circle cx="5.4" cy="5.6" r="1.1" stroke="#282828" stroke-width="0.9" fill="none"/><path d="M9.2 13.2 L13.2 13.2 L13.2 9.2 Z" fill="#282828"/></svg>
<svg style="left:221.6px;top:56.0px;" width="12" height="12" viewBox="0 0 12 12"><path d="M1.5 10 A4.6 4.6 0 1 1 9.4 5" stroke="#282828" stroke-width="1.1" fill="none" /><circle cx="1.5" cy="10" r="1" stroke="#282828" stroke-width="0.8" fill="none"/><circle cx="9.6" cy="3.2" r="1" stroke="#282828" stroke-width="0.8" fill="none"/><circle cx="5.4" cy="6.6" r="0.9" stroke="#282828" stroke-width="0.8" fill="none"/><path d="M9.2 13.2 L13.2 13.2 L13.2 9.2 Z" fill="#282828"/></svg>
<svg style="left:221.6px;top:74.5px;" width="12" height="12" viewBox="0 0 12 12"><path d="M0.5 8.5 L11 2.2" stroke="#282828" stroke-width="1.1" fill="none" /><path d="M4.5 8 L6.8 3" stroke="#282828" stroke-width="1.0" fill="none" /><path d="M9.2 13.2 L13.2 13.2 L13.2 9.2 Z" fill="#282828"/></svg>
<svg style="left:304px;top:38px;" width="12" height="12" viewBox="0 0 12 12"><path d="M0.5 1.2 H5.5 L10 5.5 V9.5" stroke="#282828" stroke-width="1.1" fill="none" /><path d="M5.5 1.2 H10 V5.5" stroke="#888" stroke-width="0.6" fill="none" /><path d="M9.2 13.2 L13.2 13.2 L13.2 9.2 Z" fill="#282828"/></svg>
<svg style="left:304px;top:56.0px;" width="12" height="12" viewBox="0 0 12 12"><path d="M0.5 1.2 H5 Q10 1.4 10 6.5 V9" stroke="#282828" stroke-width="1.1" fill="none" /><path d="M5.5 1.2 H10 V5.5" stroke="#888" stroke-width="0.6" fill="none" /><path d="M9.2 13.2 L13.2 13.2 L13.2 9.2 Z" fill="#282828"/></svg>
<svg style="left:304px;top:74.0px;" width="12" height="12" viewBox="0 0 12 12"><rect x="0.6" y="0.6" width="6.5" height="6.5" stroke="#333" stroke-width="0.9" fill="#b4b4b4"/><rect x="4.2" y="4.2" width="6.5" height="6.5" stroke="#333" stroke-width="0.9" fill="#d0d0d0"/><path d="M1 4 L4 1 M1 6.5 L6.5 1 M4.8 8 L8 4.8 M4.8 10.4 L10.4 4.8 M7.5 10.4 L10.4 7.5" stroke="#444" stroke-width="0.6" fill="none" /><path d="M9.2 13.2 L13.2 13.2 L13.2 9.2 Z" fill="#282828"/></svg>
<svg style="left:386.8px;top:38px;" width="12" height="12" viewBox="0 0 12 12"><path d="M0.5 10 L11.2 0.8" stroke="#282828" stroke-width="1.0" fill="none" /><path d="M0.2 6.8 L11 3.6" stroke="#555" stroke-width="0.8" fill="none" /><path d="M9.2 13.2 L13.2 13.2 L13.2 9.2 Z" fill="#282828"/></svg>
<svg style="left:386.8px;top:56.0px;" width="12" height="12" viewBox="0 0 12 12"><rect x="3.4" y="0.6" width="7.6" height="5.4" stroke="#282828" stroke-width="1.0" fill="none"/><rect x="0.8" y="3.4" width="6.4" height="6" stroke="#282828" stroke-width="1.0" fill="none"/><path d="M5 3.2 h4 M7 1.6 v3.4" stroke="#282828" stroke-width="0.8" fill="none" /><path d="M0.3 10.6 h2.4" stroke="#282828" stroke-width="1.6" fill="none" /><path d="M9.2 13.2 L13.2 13.2 L13.2 9.2 Z" fill="#282828"/></svg>
<svg style="left:386.8px;top:74.5px;" width="12" height="12" viewBox="0 0 12 12"><path d="M5 2 L6.5 0.6 H10.2 V3 L8.8 4.4 H5 Z M5 2 H8.8 V4.4 M8.8 2 L10.2 0.6" stroke="#282828" stroke-width="0.9" fill="none" /><rect x="0.5" y="6.6" width="4.4" height="2.8" stroke="#282828" stroke-width="0.9" fill="none"/><path d="M6.4 6.6 H9.6 M6.4 9.4 H9.6 M6.4 6.6 Q5.2 8 6.4 9.4" stroke="#282828" stroke-width="0.9" fill="none" /><path d="M9.2 13.2 L13.2 13.2 L13.2 9.2 Z" fill="#282828"/></svg>
<svg style="left:469.6px;top:38px;" width="12" height="12" viewBox="0 0 12 12"><path d="M0.3 3.2 H9 M0.3 9.8 H9" stroke="#777" stroke-width="0.7" fill="none" /><path d="M1.2 2 L9 9.6" stroke="#282828" stroke-width="1.0" fill="none" /><path d="M10.6 0.3 V8.6" stroke="#3b78c8" stroke-width="1.7" fill="none" /><path d="M9.2 13.2 L13.2 13.2 L13.2 9.2 Z" fill="#282828"/></svg>
<svg style="left:469.6px;top:55.8px;" width="12" height="12" viewBox="0 0 12 12"><rect x="3.4" y="0.8" width="5" height="5" stroke="#282828" stroke-width="1.0" fill="none"/><rect x="0.6" y="5.8" width="7.8" height="4.4" stroke="#282828" stroke-width="1.0" fill="none"/><path d="M9.6 0.6 V9" stroke="#282828" stroke-width="1.0" fill="none" /><circle cx="10" cy="10.2" r="1.2" stroke="#282828" stroke-width="0.9" fill="#f3f3f3"/></svg>
<svg style="left:469.6px;top:74.0px;" width="12" height="12" viewBox="0 0 12 12"><rect x="1.2" y="0.8" width="9.4" height="9.4" stroke="#282828" stroke-width="1.1" fill="none"/><path d="M10.6 0.8 V10.2" stroke="#5b8fd0" stroke-width="1.6" fill="none" /><path d="M1.5 10 L8 3.5 M8.4 6 V3.1 H5.5" stroke="#282828" stroke-width="1.0" fill="none" /><path d="M1.2 6.4 H5 V10.2" stroke="#777" stroke-width="0.7" fill="none" /><circle cx="1.2" cy="10.4" r="1.1" stroke="#282828" stroke-width="0.9" fill="#f3f3f3"/></svg>
<svg style="left:552.5px;top:38px;" width="12" height="12" viewBox="0 0 12 12"><path d="M0.6 10.4 L5.2 5 M7.4 2.6 L9.6 0.3" stroke="#282828" stroke-width="1.1" fill="none" /><path d="M3.4 11.4 L6.8 7.4 M8.4 5.6 L11.6 2" stroke="#282828" stroke-width="1.1" fill="none" /><path d="M5.6 6.4 h2.2 v1.6" stroke="#282828" stroke-width="0.8" fill="none" /><path d="M9.2 13.2 L13.2 13.2 L13.2 9.2 Z" fill="#282828"/></svg>
<svg style="left:552.5px;top:55.8px;" width="12" height="12" viewBox="0 0 12 12"><path d="M1 0.8 H11.2 L6.2 4.6 Z" stroke="#666" stroke-width="1.0" fill="none" /><path d="M0.6 10.6 H11.6 L6.2 5.6 Z" stroke="#282828" stroke-width="1.1" fill="none" /></svg>
<svg style="left:552.5px;top:74.0px;" width="12" height="12" viewBox="0 0 12 12"><rect x="2" y="0.6" width="5.4" height="3.6" stroke="#282828" stroke-width="1.0" fill="none"/><path d="M1 8.4 L8.6 3.6" stroke="#282828" stroke-width="1.0" fill="none" /><path d="M0.4 8.4 H11" stroke="#282828" stroke-width="1.0" fill="none" /><path d="M0.4 10.8 H9.6" stroke="#282828" stroke-width="1.6" fill="none" /><path d="M9.2 13.2 L13.2 13.2 L13.2 9.2 Z" fill="#282828"/></svg>
<svg style="left:635.4px;top:38px;" width="12" height="12" viewBox="0 0 12 12"><path d="M7 0.2 L4.4 4.6 H7.2 L4.6 8.6" stroke="#282828" stroke-width="1.4" fill="none" /><path d="M0.8 6.6 V11.4 M10.8 6.6 V11.4 M0.8 9.4 H10.8" stroke="#282828" stroke-width="1.0" fill="none" /><path d="M0.8 9.4 L3 8.2 V10.6 Z M10.8 9.4 L8.6 8.2 V10.6 Z" fill="#282828"/></svg>
<svg style="left:653.6px;top:38px;" width="12" height="12" viewBox="0 0 12 12"><circle cx="5.8" cy="5.8" r="5" stroke="#282828" stroke-width="1.1" fill="none"/><path d="M2.2 9.4 L9.4 2.2" stroke="#282828" stroke-width="1.1" fill="none" /></svg>
<svg style="left:635.4px;top:55.8px;" width="12" height="12" viewBox="0 0 12 12"><path d="M1 0.4 V11 M10.4 0.4 V8.4" stroke="#282828" stroke-width="1.0" fill="none" /><path d="M1 2.4 H10.4" stroke="#282828" stroke-width="0.9" fill="none" /><path d="M1 2.4 L3.2 1.3 V3.5 Z M10.4 2.4 L8.2 1.3 V3.5 Z" fill="#282828"/><path d="M9.2 13.2 L13.2 13.2 L13.2 9.2 Z" fill="#282828"/></svg>
<svg style="left:653.6px;top:55.8px;" width="12" height="12" viewBox="0 0 12 12"><path d="M0.6 1 H4.6 Q10.4 1.6 10.8 8.4" stroke="#282828" stroke-width="1.1" fill="none" /><path d="M2.6 7.6 L8.2 2.8" stroke="#282828" stroke-width="1.0" fill="none" /><path d="M9.2 13.2 L13.2 13.2 L13.2 9.2 Z" fill="#282828"/></svg>
<svg style="left:635.4px;top:73.8px;" width="12" height="12" viewBox="0 0 12 12"><path d="M1 0.4 V11" stroke="#282828" stroke-width="1.2" fill="none" /><path d="M1 2.6 H11.4" stroke="#282828" stroke-width="0.9" fill="none" /><path d="M1 2.6 L3.4 1.4 V3.8 Z" fill="#282828"/></svg>
<svg style="left:653.6px;top:73.8px;" width="12" height="12" viewBox="0 0 12 12"><path d="M4.4 0.8 L1 10.6 H10.2 Q9.6 5.4 5.6 3.4" stroke="#282828" stroke-width="1.0" fill="none" /><path d="M4.4 0.8 L5.6 3.4" stroke="#282828" stroke-width="1.0" fill="none" /><path d="M9.2 13.2 L13.2 13.2 L13.2 9.2 Z" fill="#282828"/></svg>
<svg style="left:672px;top:38px;" width="12" height="12" viewBox="0 0 12 12"><path d="M4 1 H8.4 M4 1 L0.8 10 M8.4 1 L11.2 10" stroke="#282828" stroke-width="1.0" fill="none" /><path d="M0.4 11.4 L0.7 8.6 L2.6 9.6 Z M11.6 11.4 L9.4 9.6 L11.3 8.6 Z" fill="#282828"/></svg>
<svg style="left:690px;top:38px;" width="12" height="12" viewBox="0 0 12 12"><path d="M0.8 10.4 L5.4 0.8 H11.6 M5 5.6 H11 M3.6 9 H11.6" stroke="#282828" stroke-width="0.9" fill="none" /><path d="M0.2 11.6 L0.6 8.6 L2.6 9.8 Z" fill="#282828"/></svg>
<svg style="left:707.4px;top:38px;" width="12" height="12" viewBox="0 0 12 12"><path d="M0.4 10.8 H11.6" stroke="#282828" stroke-width="1.0" fill="none" /><path d="M2.6 6.4 H9.6 L6.2 10.6 Z" stroke="#282828" stroke-width="0.9" fill="none" /><path d="M6.2 10.6 L10.8 0.4" stroke="#282828" stroke-width="1.0" fill="none" /></svg>
<svg style="left:725.4px;top:38px;" width="12" height="12" viewBox="0 0 12 12"><rect x="1.4" y="0.5" width="9.2" height="7" stroke="#282828" stroke-width="1.0" fill="none"/><path d="M0.4 10.8 H11.6 M6 7.5 V10.8" stroke="#282828" stroke-width="1.1" fill="none" /><path d="M4.4 6 L6 2 L7.6 6 M5 4.6 H7" stroke="#282828" stroke-width="0.8" fill="none" /><path d="M6 8.4 L4.6 10.8 H7.4 Z" fill="#282828"/></svg>
<svg style="left:672px;top:55.8px;" width="12" height="12" viewBox="0 0 12 12"><path d="M2 6.6 L4.6 0.6 L7.2 6.6 M3 4.4 H6.2" stroke="#282828" stroke-width="1.1" fill="none" /><path d="M0.4 9.8 H10" stroke="#282828" stroke-width="1.3" fill="none" /><path d="M11.8 9.8 L8.8 8.2 V11.4 Z" fill="#282828"/></svg>
<svg style="left:690px;top:55.8px;" width="12" height="12" viewBox="0 0 12 12"><path d="M1 6.6 L3.6 0.6 L6.2 6.6 M2 4.4 H5.2" stroke="#282828" stroke-width="1.1" fill="none" /><path d="M0.4 9.8 H9" stroke="#282828" stroke-width="1.6" fill="none" /><path d="M9.6 0.6 V8" stroke="#282828" stroke-width="0.9" fill="none" /><path d="M9.6 9.6 L8.2 6.6 H11 Z" fill="#282828"/><path d="M9.2 13.2 L13.2 13.2 L13.2 9.2 Z" fill="#282828"/></svg>
<svg style="left:707.4px;top:55.8px;" width="12" height="12" viewBox="0 0 12 12"><circle cx="5" cy="6.6" r="4.4" stroke="#282828" stroke-width="1.0" fill="none"/><path d="M3 5.2 H7 M5 5.2 V9.2 M3.4 5.2 V7.4" stroke="#282828" stroke-width="0.9" fill="none" /><path d="M6.2 2.6 Q8 0.4 11.4 0.8" stroke="#282828" stroke-width="0.9" fill="none" /></svg>
<svg style="left:725.4px;top:55.8px;" width="12" height="12" viewBox="0 0 12 12"><path d="M1.6 0.4 V8.4" stroke="#2d62b8" stroke-width="1.0" fill="none" /><path d="M1.6 0.8 H11.4 V4.8 H1.6 M5 0.8 V4.8 M8.2 0.8 V4.8" stroke="#282828" stroke-width="1.0" fill="none" /><path d="M0.4 10.8 H11.6" stroke="#282828" stroke-width="1.0" fill="none" /><path d="M1.6 7.6 L0 10.8 H3.2 Z" fill="#282828"/></svg>
<svg style="left:672px;top:73.5px;" width="12" height="12" viewBox="0 0 12 12"><text x="0.2" y="11.4" font-family="Liberation Serif, serif" font-size="15.5" textLength="11.6" lengthAdjust="spacingAndGlyphs" fill="#282828">T</text></svg>
<svg style="left:690px;top:74.0px;" width="12" height="12" viewBox="0 0 12 12"><rect x="0.6" y="0.6" width="10.8" height="10.2" stroke="#555" stroke-width="1.0" fill="#b8b8b8"/><path d="M0.6 4 H11.4 M0.6 7.4 H11.4 M4.2 0.6 V10.8 M7.8 0.6 V10.8" stroke="#555" stroke-width="0.9" fill="none" /></svg>
<svg style="left:707.4px;top:73.5px;" width="12" height="12" viewBox="0 0 12 12"><path d="M7.4 0.2 L4.4 5 H7.6 L4.2 10" stroke="#282828" stroke-width="1.5" fill="none" /><path d="M1 11 H11" stroke="#282828" stroke-width="0.8" fill="none" /></svg>
<svg style="left:725.4px;top:74.0px;" width="12" height="12" viewBox="0 0 12 12"><circle cx="5.8" cy="5.8" r="3.8" stroke="#282828" stroke-width="1.1" fill="none"/><path d="M5.8 0.2 V11.4 M0.2 5.8 H11.4" stroke="#282828" stroke-width="1.0" fill="none" /><path d="M9.2 13.2 L13.2 13.2 L13.2 9.2 Z" fill="#282828"/></svg>
<svg style="left:744.6px;top:38px;" width="12" height="12" viewBox="0 0 12 12"><path d="M2 0.6 V11.4 M0.4 9.6 H10.6" stroke="#282828" stroke-width="1.0" fill="none" /><path d="M2 3.2 H8.4" stroke="#282828" stroke-width="0.9" fill="none" /><circle cx="3.6" cy="3.2" r="0.9" stroke="#282828" stroke-width="0.8" fill="none"/><circle cx="8.4" cy="3.2" r="1.2" stroke="#282828" stroke-width="0.9" fill="none"/><path d="M8.4 4.4 V8" stroke="#282828" stroke-width="0.9" fill="none" /><path d="M8.4 9.4 L7.2 7 H9.6 Z" fill="#282828"/></svg>
<svg style="left:762px;top:38px;" width="12" height="12" viewBox="0 0 12 12"><path d="M0.6 8.8 L8.6 0.6 M3.4 11.4 L11.4 3.2" stroke="#282828" stroke-width="1.1" fill="none" /></svg>
<svg style="left:780px;top:38px;" width="12" height="12" viewBox="0 0 12 12"><path d="M0.4 10.6 H11.6" stroke="#666" stroke-width="0.9" fill="none" /><path d="M6.6 0.4 V10.6" stroke="#282828" stroke-width="1.1" fill="none" /><path d="M6.6 7.6 H9.6 V10.6" stroke="#282828" stroke-width="0.8" fill="none" /></svg>
<svg style="left:798px;top:38px;" width="12" height="12" viewBox="0 0 12 12"><circle cx="5.2" cy="4.8" r="4.2" stroke="#282828" stroke-width="1.0" fill="none"/><path d="M3.4 11.2 L11.6 2.6" stroke="#282828" stroke-width="1.1" fill="none" /></svg>
<svg style="left:744.6px;top:55.8px;" width="12" height="12" viewBox="0 0 12 12"><path d="M0.6 10.8 L10.8 0.6" stroke="#282828" stroke-width="1.2" fill="none" /></svg>
<svg style="left:762px;top:55.8px;" width="12" height="12" viewBox="0 0 12 12"><path d="M0.4 10.4 L9.6 2 M0.4 10.4 H11 M0.4 10.4 L10.6 6.6" stroke="#282828" stroke-width="1.0" fill="none" /></svg>
<svg style="left:780px;top:55.5px;" width="12" height="12" viewBox="0 0 12 12"><path d="M6 3.6 L11.4 9 H0.6 Z" fill="#282828"/><circle cx="6" cy="2.2" r="1.3" stroke="#282828" stroke-width="0.9" fill="none"/><path d="M1 10.6 h1.4 M3.4 10.6 h1.4 M5.8 10.6 h1.4 M8.2 10.6 h1.4 M10.2 10.6 h1.4" stroke="#282828" stroke-width="1.0" fill="none" /><path d="M9.2 13.2 L13.2 13.2 L13.2 9.2 Z" fill="#282828"/></svg>
<svg style="left:798px;top:55.8px;" width="12" height="12" viewBox="0 0 12 12"><circle cx="5.8" cy="5.8" r="5" stroke="#282828" stroke-width="1.0" fill="none"/><circle cx="5.8" cy="5.8" r="2.6" stroke="#282828" stroke-width="1.0" fill="none"/></svg>
<svg style="left:744.6px;top:73.8px;" width="12" height="12" viewBox="0 0 12 12"><path d="M0.8 0.4 L2.4 9.2 M9 0.4 L7.4 9.2" stroke="#282828" stroke-width="1.0" fill="none" /><circle cx="2.6" cy="10" r="1" stroke="#282828" stroke-width="0.8" fill="none"/><circle cx="7.2" cy="10" r="1" stroke="#282828" stroke-width="0.8" fill="none"/><path d="M9.2 13.2 L13.2 13.2 L13.2 9.2 Z" fill="#282828"/></svg>
<svg style="left:762px;top:73.8px;" width="12" height="12" viewBox="0 0 12 12"><path d="M2 4.2 H10.6 M2 8 H10.6" stroke="#282828" stroke-width="1.7" fill="none" /></svg>
<svg style="left:780px;top:73.8px;" width="12" height="12" viewBox="0 0 12 12"><path d="M1.2 0.8 V10.6 H11.2 Z" stroke="#282828" stroke-width="1.1" fill="none" /><path d="M1.2 7.6 H4.2 V10.6" stroke="#282828" stroke-width="0.8" fill="none" /></svg>
<svg style="left:798px;top:73.8px;" width="12" height="12" viewBox="0 0 12 12"><circle cx="5.8" cy="5.8" r="5" stroke="#282828" stroke-width="1.0" fill="none"/><path d="M2.4 8 L8 2.4 M4 9.6 L9.6 4" stroke="#282828" stroke-width="1.6" fill="none" /><circle cx="5.8" cy="5.8" r="2.4" stroke="#f3f3f3" stroke-width="0.7" fill="none"/><path d="M9.2 13.2 L13.2 13.2 L13.2 9.2 Z" fill="#282828"/></svg>
<svg style="left:816.6px;top:38px;" width="12" height="12" viewBox="0 0 12 12"><path d="M1.6 10 L9.6 2" stroke="#282828" stroke-width="0.9" fill="none" stroke-dasharray="1.6 1.2"/><path d="M0.4 11.4 L0.8 8.6 L3.2 11 Z" fill="#282828"/><circle cx="10.2" cy="1.6" r="1.1" stroke="#282828" stroke-width="0.8" fill="none"/><text x="5.4" y="6.4" font-family="Liberation Sans, sans-serif" font-size="6.5" font-weight="bold" fill="#282828">?</text></svg>
<svg style="left:834.2px;top:38px;" width="12" height="12" viewBox="0 0 12 12"><path d="M1.4 2.4 V9.6 M2.8 10.8 H9.8" stroke="#282828" stroke-width="0.9" fill="none" stroke-dasharray="1.4 1.1"/><path d="M1.6 1.6 Q8 2 10.6 9.6" stroke="#282828" stroke-width="0.9" fill="none" stroke-dasharray="1.4 1.1"/><circle cx="1.4" cy="1.4" r="1" stroke="#282828" stroke-width="0.8" fill="none"/><circle cx="1.4" cy="10.8" r="1" stroke="#282828" stroke-width="0.8" fill="none"/><circle cx="10.8" cy="10.6" r="1" stroke="#282828" stroke-width="0.8" fill="none"/><text x="7.4" y="6.2" font-family="Liberation Sans, sans-serif" font-size="7" font-weight="bold" fill="#282828">?</text></svg>
<svg style="left:816.6px;top:55.8px;" width="12" height="12" viewBox="0 0 12 12"><path d="M2.4 3 L4 8.6 H8 L9.6 3" stroke="#282828" stroke-width="0.9" fill="none" /><path d="M0.6 2 L3.4 4.6 M0.6 11 L4 8.6 M11.4 2 L8.6 4.6 M11.4 11 L8 8.6" stroke="#282828" stroke-width="0.9" fill="none" /><text x="4" y="7.8" font-family="Liberation Sans, sans-serif" font-size="7.5" font-weight="bold" fill="#282828">?</text></svg>
<svg style="left:834.2px;top:55.8px;" width="12" height="12" viewBox="0 0 12 12"><path d="M0.8 0.8 H5.4 V6.6 H11.2 V11 H0.8 Z" stroke="#282828" stroke-width="1.1" fill="none" /><text x="6.6" y="6" font-family="Liberation Sans, sans-serif" font-size="7.5" font-weight="bold" fill="#282828">?</text></svg>
<svg style="left:816.6px;top:73.8px;" width="12" height="12" viewBox="0 0 12 12"><path d="M0.8 0.8 H5.4 V6.6 H11.2 V11 H0.8 Z" fill="#b4b4b4"/><path d="M0.8 0.8 H5.4 V6.6 H11.2 V11 H0.8 Z" stroke="#282828" stroke-width="1.0" fill="none" /><text x="6.6" y="6" font-family="Liberation Sans, sans-serif" font-size="7.5" font-weight="bold" fill="#282828">?</text></svg>
<svg style="left:834.2px;top:73.8px;" width="12" height="12" viewBox="0 0 12 12"><path d="M2.2 1.4 V10.2 H11" stroke="#2d62b8" stroke-width="1.0" fill="none" /><path d="M2.2 0 L1 2.6 H3.4 Z M12 10.2 L9.6 9 V11.4 Z" fill="#222"/><text x="6.4" y="6.4" font-family="Liberation Sans, sans-serif" font-size="7.5" font-weight="bold" fill="#282828">?</text><text x="3.4" y="9.2" font-size="5" fill="#282828">b</text></svg>
<svg style="left:853px;top:38px;" width="12" height="12" viewBox="0 0 12 12"><rect x="4.4" y="0.8" width="6.8" height="5.4" stroke="#282828" stroke-width="1.0" fill="none"/><circle cx="4.8" cy="7" r="3.8" stroke="#282828" stroke-width="1.0" fill="none"/><path d="M0.4 5 H6" stroke="#282828" stroke-width="1.0" fill="none" /><path d="M2.4 8.4 H7.2" stroke="#282828" stroke-width="0.9" fill="none" /></svg>
<svg style="left:871px;top:38px;" width="12" height="12" viewBox="0 0 12 12"><path d="M1.2 0.8 H7 L11.2 5 V10.8 H1.2 Z" stroke="#282828" stroke-width="1.1" fill="none" /><circle cx="6.2" cy="5.8" r="2.3" stroke="#282828" stroke-width="1.0" fill="none"/><circle cx="1.2" cy="10.8" r="1" stroke="#282828" stroke-width="0.8" fill="#f3f3f3"/></svg>
<svg style="left:853px;top:55.8px;" width="12" height="12" viewBox="0 0 12 12"><rect x="0.6" y="0.6" width="10.8" height="10.4" stroke="#282828" stroke-width="1.1" fill="#fff"/><path d="M1.2 10.4 L4.6 5.4 L6.6 8 L8 6.6 L10.8 10.4 Z" fill="#282828"/><circle cx="8.6" cy="3" r="1.1" stroke="#282828" stroke-width="0.1" fill="#282828"/></svg>
<svg style="left:871px;top:55.8px;" width="12" height="12" viewBox="0 0 12 12"><path d="M0.8 1 H7 M0.8 1 V10.8 H10.4 V4.6" stroke="#555" stroke-width="0.9" fill="none" /><path d="M5.6 4.6 V8 H10.4 M5.6 4.6 L7 1 M10.4 4.6 L7 1" stroke="#555" stroke-width="0.9" fill="none" /></svg>
<svg style="left:853px;top:73.8px;" width="12" height="12" viewBox="0 0 12 12"><rect x="0.8" y="1.4" width="9.6" height="9" stroke="#d9d9d9" stroke-width="1.0" fill="none"/><path d="M3 6 L5 8 L8.4 4" stroke="#d9d9d9" stroke-width="1.0" fill="none" /><path d="M3 0.4 V2.4 M8.4 0.4 V2.4" stroke="#d9d9d9" stroke-width="1" fill="none" /></svg>
<svg style="left:871px;top:73.8px;" width="12" height="12" viewBox="0 0 12 12"><rect x="4.4" y="0.8" width="7" height="4.4" stroke="#282828" stroke-width="1.0" fill="none"/><path d="M4.4 0.8 V6.6 L1.4 11 M4.4 6.6 L6.4 11" stroke="#282828" stroke-width="1.0" fill="none" /><path d="M0.4 11.4 L1.4 8.8 L3.2 10.2 Z" fill="#282828"/></svg>
<svg style="left:888.8px;top:38px;" width="12" height="12" viewBox="0 0 12 12"><path d="M0.8 10.8 V5.4 H4.4 V0.8 H11.2 V10.8 Z" stroke="#333" stroke-width="1.1" fill="#c4c4c4" /><path d="M3 8.6 V7.4 H6.4 V3 H9 V8.6 Z" stroke="#333" stroke-width="0.8" fill="#f3f3f3" /></svg>
<svg style="left:907.2px;top:38px;" width="12" height="12" viewBox="0 0 12 12"><path d="M0.4 5.8 H4 M5.4 5.8 H8.6" stroke="#666" stroke-width="1.0" fill="none" /><path d="M10.4 0.4 V3 M10.4 4.4 V7.4 M10.4 8.8 V11.4" stroke="#333" stroke-width="1.0" fill="none" /></svg>
<svg style="left:888.8px;top:55.8px;" width="12" height="12" viewBox="0 0 12 12"><path d="M1.6 7.4 Q2.4 1.2 7 1 Q11 1.4 11 5.4 L9.8 7.4 Z" fill="#222"/><path d="M3.4 6 L8 2.6" stroke="#f3f3f3" stroke-width="1.0" fill="none" /><path d="M0.4 8.6 H11.6" stroke="#282828" stroke-width="0.8" fill="none" /><path d="M1.6 8.6 L0.6 11.2 M3.8 8.6 L3 11.2 M6 8.6 L5.4 11.2 M8.2 8.6 L8.8 11.2 M10.4 8.6 L11.4 11.2 M1 10.2 H11" stroke="#282828" stroke-width="0.7" fill="none" /></svg>
<svg style="left:907.2px;top:55.8px;" width="12" height="12" viewBox="0 0 12 12"><circle cx="7.4" cy="4.6" r="4.2" stroke="#282828" stroke-width="0.5" fill="#1c1c1c"/><rect x="0.8" y="5" width="6.8" height="6" stroke="#f3f3f3" stroke-width="0.8" fill="#1c1c1c"/></svg>
<svg style="left:888.8px;top:73.8px;" width="12" height="12" viewBox="0 0 12 12"><path d="M0.8 10.8 V5.4 L3.4 3.6 Q4.4 0.6 7.6 1 Q11.4 1.6 11 5 Q10.6 7 8.4 7.2 V10.8 Z" stroke="#282828" stroke-width="1.1" fill="none" /></svg>
<svg style="left:926.5px;top:37.5px;" width="12" height="12" viewBox="0 0 12 12"><path d="M0.6 0.6 H11 V2.2 H0.6 Z" fill="#282828"/><path d="M1.2 2.2 V10.6 M3 2.2 V10.6 M4.8 2.2 V9 L6 11.2 L7.2 9 V2.2 M9 2.2 V8 L10.4 5.4 V2.2" stroke="#333" stroke-width="0.9" fill="none" /><path d="M2.1 2.2 V10.6 M8.1 2.2 V8" stroke="#999" stroke-width="0.9" fill="none" /><path d="M9.2 13.2 L13.2 13.2 L13.2 9.2 Z" fill="#282828"/></svg>
<svg style="left:926.5px;top:55.8px;" width="12" height="12" viewBox="0 0 12 12"><circle cx="5.8" cy="5.8" r="5" stroke="#282828" stroke-width="1.0" fill="none"/><path d="M8.6 4.4 A3 3 0 1 0 8.4 7.6" stroke="#282828" stroke-width="1.0" fill="none" /><circle cx="5.8" cy="6" r="0.6" stroke="#282828" stroke-width="0.6" fill="#282828"/></svg>
<svg style="left:926.5px;top:73.8px;" width="12" height="12" viewBox="0 0 12 12"><path d="M2 4.6 H9.4 L8 8.6 H3.6 Z" stroke="#282828" stroke-width="1.0" fill="none" /><path d="M3.6 8.6 L5.8 11.2 L8 8.6" stroke="#282828" stroke-width="1.0" fill="none" /><circle cx="9.4" cy="2" r="1.5" stroke="#282828" stroke-width="0.9" fill="none"/><path d="M0.8 4.6 H2 M4.2 3.6 L8 2.6" stroke="#282828" stroke-width="0.9" fill="none" /><path d="M5.8 0.8 V4.6" stroke="#282828" stroke-width="0.9" fill="none" /></svg>
<svg style="left:2.5px;top:105px;" width="8.5" height="11" viewBox="0 0 8.5 11"><path d="M1.4 0 V11" stroke="#f4f4f4" stroke-width="1.5" fill="none" /><path d="M1.4 1.8 H8 M1.4 5.5 H8 M1.4 9.4 H8" stroke="#f4f4f4" stroke-width="1.4" fill="none" /></svg>
<svg style="left:3px;top:122.5px;" width="9.5" height="11.5" viewBox="0 0 9.5 11.5"><rect x="0.6" y="0.6" width="8.3" height="10.3" stroke="#444" stroke-width="1.0" fill="none"/><path d="M2.2 3 h1.6 M5 3 h2.6 M2.2 5.8 h1.6 M5 5.8 h2.6 M2.2 8.6 h1.6 M5 8.6 h2.6" stroke="#666" stroke-width="1.2" fill="none" /></svg>
<svg style="left:2.5px;top:139.5px;" width="10" height="13" viewBox="0 0 10 13"><text x="0.5" y="10.5" font-family="Liberation Serif, serif" font-style="italic" font-size="13" fill="#222">f</text><text x="4.6" y="11.6" font-family="Liberation Sans, sans-serif" font-size="7.5" fill="#222">x</text></svg>
<svg style="left:1.5px;top:158px;" width="11" height="11.5" viewBox="0 0 11 11.5"><path d="M0.6 1.4 H10.4 M0.6 5.7 H10.4 M0.6 10 H10.4" stroke="#111" stroke-width="2.6" fill="none" stroke-linecap="round"/></svg>
<svg style="left:220px;top:104px;" width="8" height="8" viewBox="0 0 8 8"><rect x="3.2" y="0" width="1.6" height="2" fill="#1a1a1a" transform="rotate(0 4 4)"/><rect x="3.2" y="0" width="1.6" height="2" fill="#1a1a1a" transform="rotate(45 4 4)"/><rect x="3.2" y="0" width="1.6" height="2" fill="#1a1a1a" transform="rotate(90 4 4)"/><rect x="3.2" y="0" width="1.6" height="2" fill="#1a1a1a" transform="rotate(135 4 4)"/><rect x="3.2" y="0" width="1.6" height="2" fill="#1a1a1a" transform="rotate(180 4 4)"/><rect x="3.2" y="0" width="1.6" height="2" fill="#1a1a1a" transform="rotate(225 4 4)"/><rect x="3.2" y="0" width="1.6" height="2" fill="#1a1a1a" transform="rotate(270 4 4)"/><rect x="3.2" y="0" width="1.6" height="2" fill="#1a1a1a" transform="rotate(315 4 4)"/><circle cx="4" cy="4" r="2.35" stroke="#1a1a1a" stroke-width="1.5" fill="none"/></svg>
<svg style="left:20px;top:122px;" width="10" height="5.5" viewBox="0 0 10 5.5"><path d="M2.8 0.3 L9.8 0.3 L7 5 L0 5 Z" fill="#111"/></svg>
<svg style="left:38px;top:119px;" width="11.5" height="11.5" viewBox="0 0 11.5 11.5"><rect x="4.6" y="0.8" width="6.4" height="5.2" stroke="#282828" stroke-width="1.0" fill="none"/><circle cx="5" cy="7" r="3.6" stroke="#282828" stroke-width="1.0" fill="none"/><path d="M0.3 5.2 H6" stroke="#282828" stroke-width="1.0" fill="none" /><path d="M2.8 8.6 H7" stroke="#282828" stroke-width="0.8" fill="none" /></svg>
<svg style="left:55px;top:119px;" width="12" height="11.5" viewBox="0 0 12 11.5"><rect x="0.6" y="0.6" width="10.8" height="10.3" stroke="#282828" stroke-width="1.1" fill="#fff"/><path d="M1.2 10.3 L4.8 4.8 L7 7.8 L8.2 6.6 L10.8 10.3 Z" fill="#282828"/><circle cx="8.6" cy="3" r="1.2" stroke="#282828" stroke-width="0.1" fill="#282828"/></svg>
<svg style="left:219.8px;top:139.6px;" width="5.2" height="3" viewBox="0 0 5.2 3"><path d="M0 0 L5.2 0 L2.6 3 Z" fill="#222"/></svg>
<svg style="left:20px;top:153.5px;" width="11" height="11.5" viewBox="0 0 11 11.5"><path d="M0 0 H11 L6.8 5 V10.6 L4.2 11.4 V5 Z" fill="#111"/></svg>
<svg style="left:38.5px;top:155.5px;" width="8.5" height="8.5" viewBox="0 0 8.5 8.5"><circle cx="5.4" cy="3.1" r="2.5" stroke="#aaa" stroke-width="0.9" fill="none"/><path d="M3.6 4.9 L0.5 8" stroke="#aaa" stroke-width="1.2" fill="none" /></svg>
<svg style="left:122.5px;top:175px;" width="11.5" height="9.5" viewBox="0 0 11.5 9.5"><rect x="0.5" y="0.5" width="10.3" height="8.5" stroke="#333" stroke-width="1.0" fill="#fff"/><path d="M2.2 3.2 h3 v3 h-3 M6.4 3.2 h1.6 q1.6 1.5 0 3 h-1.6 z" stroke="#222" stroke-width="0.9" fill="none" /></svg>
<svg style="left:115px;top:196.4px;" width="4" height="5" viewBox="0 0 4 5"><path d="M0 0 L3.6 2.3 L0 4.6 Z" fill="#222"/></svg>
<svg style="left:122.5px;top:194px;" width="11.5" height="10" viewBox="0 0 11.5 10"><path d="M0 0.6 H4.2 L5.2 1.8 H10 V3.2 H11.4 L9.6 9.8 H0 Z" fill="#111"/><path d="M1.4 8.6 L3 4.4 H10.8" stroke="#f1f1f1" stroke-width="0.8" fill="none" /></svg>
<span class="t" id="t0" style="left:19.5px;top:3.00px;font-size:9px;color:#4a4a4a;transform:scaleX(0.9033);">Файл</span><span class="t" id="t1" style="left:48px;top:3.00px;font-size:9px;color:#4a4a4a;transform:scaleX(0.9209);">Правка</span><span class="t" id="t2" style="left:84px;top:3.00px;font-size:9px;color:#4a4a4a;transform:scaleX(0.9029);">Выделить</span><span class="t" id="t3" style="left:130px;top:3.00px;font-size:9px;color:#4a4a4a;transform:scaleX(0.8591);">Вид</span><span class="t" id="t4" style="left:152px;top:3.00px;font-size:9px;color:#4a4a4a;transform:scaleX(0.8818);">Вставка</span><span class="t" id="t5" style="left:189px;top:3.00px;font-size:9px;color:#4a4a4a;transform:scaleX(0.9626);">Черчение</span><span class="t" id="t6" style="left:236px;top:3.00px;font-size:9px;color:#4a4a4a;transform:scaleX(0.9479);">Ограничения</span><span class="t" id="t7" style="left:296px;top:3.00px;font-size:9px;color:#4a4a4a;transform:scaleX(0.9038);">Оформление</span><span class="t" id="t8" style="left:354.5px;top:3.00px;font-size:9px;color:#4a4a4a;transform:scaleX(0.9293);">Диагностика</span><span class="t" id="t9" style="left:411px;top:3.00px;font-size:9px;color:#4a4a4a;transform:scaleX(0.9491);">Управление</span><span class="t" id="t10" style="left:466.5px;top:3.00px;font-size:9px;color:#4a4a4a;transform:scaleX(0.9591);">Настройка</span><span class="t" id="t11" style="left:515.5px;top:3.00px;font-size:9px;color:#4a4a4a;transform:scaleX(0.9401);">Приложения</span><span class="t" id="t12" style="left:574.5px;top:3.00px;font-size:9px;color:#4a4a4a;transform:scaleX(0.9081);">Окно</span><span class="t" id="t13" style="left:602px;top:3.00px;font-size:9px;color:#4a4a4a;transform:scaleX(0.9062);">Справка</span><span class="t" id="t14" style="left:870.5px;top:3.00px;font-size:9px;color:#b0b0b0;transform:scaleX(0.9609);">Поиск по командам (Alt+/)</span><span class="t" id="t15" style="left:48px;top:21.00px;font-size:9px;color:#f0f0f0;transform:scaleX(0.9101);">технологическая сх...</span><span class="t" id="t16" style="left:135.2px;top:18.00px;font-size:12.5px;color:#ffffff;transform:scaleX(0.8205);">×</span><span class="t" id="t17" style="left:164.4px;top:21.00px;font-size:9px;color:#3a3a3a;transform:scaleX(0.9018);">Кондуктор специфи...</span><span class="t" id="t18" style="left:16px;top:39.00px;font-size:9px;color:#ffffff;transform:scaleX(0.9379);">Черчение</span><span class="t" id="t19" style="left:16px;top:57.00px;font-size:9px;color:#4a4a4a;transform:scaleX(0.9391);">Управление</span><span class="t" id="t20" style="left:16px;top:71.00px;font-size:9px;color:#4a4a4a;transform:scaleX(0.9495);">Справочник</span><span class="t" id="t21" style="left:16px;top:79.00px;font-size:9px;color:#4a4a4a;transform:scaleX(0.9198);">материалов и...</span><span class="t" id="t22" style="left:153.8px;top:39.00px;font-size:9px;color:#404040;transform:scaleX(0.9242);">Автолиния</span><span class="t" id="t23" style="left:153.8px;top:57.00px;font-size:9px;color:#404040;transform:scaleX(0.9527);">Прямоугольник</span><span class="t" id="t24" style="left:153.8px;top:75.00px;font-size:9px;color:#404040;transform:scaleX(0.9202);">Отрезок</span><span class="t" id="t25" style="left:236.6px;top:39.00px;font-size:9px;color:#404040;transform:scaleX(0.9163);">Окружность</span><span class="t" id="t26" style="left:236.6px;top:57.00px;font-size:9px;color:#404040;transform:scaleX(0.8682);">Дуга</span><span class="t" id="t27" style="left:236.6px;top:71.00px;font-size:9px;color:#404040;transform:scaleX(0.9049);">Вспомогатель...</span><span class="t" id="t28" style="left:236.6px;top:79.00px;font-size:9px;color:#404040;transform:scaleX(0.9375);">прямая</span><span class="t" id="t29" style="left:319.4px;top:39.00px;font-size:9px;color:#404040;transform:scaleX(0.8314);">Фаска</span><span class="t" id="t30" style="left:319.4px;top:57.00px;font-size:9px;color:#404040;transform:scaleX(0.8944);">Скругление</span><span class="t" id="t31" style="left:319.4px;top:75.00px;font-size:9px;color:#404040;transform:scaleX(0.9096);">Штриховка</span><span class="t" id="t32" style="left:401.9px;top:39.00px;font-size:9px;color:#404040;transform:scaleX(0.9479);">Усечь кривую</span><span class="t" id="t33" style="left:401.9px;top:53.00px;font-size:9px;color:#404040;transform:scaleX(0.9151);">Переместить по</span><span class="t" id="t34" style="left:401.9px;top:61.00px;font-size:9px;color:#404040;transform:scaleX(0.9423);">координатам</span><span class="t" id="t35" style="left:401.9px;top:71.00px;font-size:9px;color:#404040;transform:scaleX(0.9468);">Копия</span><span class="t" id="t36" style="left:401.9px;top:79.00px;font-size:9px;color:#404040;transform:scaleX(0.9117);">указанием</span><span class="t" id="t37" style="left:485px;top:35.00px;font-size:9px;color:#404040;transform:scaleX(0.9113);">Удлинить до</span><span class="t" id="t38" style="left:485px;top:43.00px;font-size:9px;color:#404040;transform:scaleX(0.9186);">ближайшего о...</span><span class="t" id="t39" style="left:485px;top:57.00px;font-size:9px;color:#404040;transform:scaleX(0.9133);">Повернуть</span><span class="t" id="t40" style="left:485px;top:75.00px;font-size:9px;color:#404040;transform:scaleX(0.9115);">Масштабиров...</span><span class="t" id="t41" style="left:567.5px;top:39.00px;font-size:9px;color:#404040;transform:scaleX(0.9100);">Разбить кривую</span><span class="t" id="t42" style="left:567.5px;top:53.00px;font-size:9px;color:#404040;transform:scaleX(0.8986);">Зеркально</span><span class="t" id="t43" style="left:567.5px;top:61.00px;font-size:9px;color:#404040;transform:scaleX(0.9100);">отразить</span><span class="t" id="t44" style="left:567.5px;top:71.00px;font-size:9px;color:#404040;transform:scaleX(0.9039);">Деформация</span><span class="t" id="t45" style="left:567.5px;top:79.00px;font-size:9px;color:#404040;transform:scaleX(0.9211);">перемещением</span><span class="t" id="t46" style="left:88px;top:92.00px;font-size:7.5px;color:#505050;transform:scaleX(0.8979);">Системная</span><span class="t" id="t47" style="left:233.5px;top:92.00px;font-size:7.5px;color:#505050;transform:scaleX(0.9635);">Геометрия</span><span class="t" id="t48" style="left:487.5px;top:92.00px;font-size:7.5px;color:#505050;transform:scaleX(0.9273);">Правка</span><span class="t" id="t49" style="left:635.6px;top:92.00px;font-size:7.5px;color:#505050;transform:scaleX(0.7901);">Ра...</span><span class="t" id="t50" style="left:674.4px;top:92.00px;font-size:7.5px;color:#505050;transform:scaleX(0.9421);">Обозначения</span><span class="t" id="t51" style="left:747px;top:92.00px;font-size:7.5px;color:#505050;transform:scaleX(0.9405);">Ограничения</span><span class="t" id="t52" style="left:815.6px;top:92.00px;font-size:7.5px;color:#505050;transform:scaleX(0.8885);">Ди...</span><span class="t" id="t53" style="left:853px;top:92.00px;font-size:7.5px;color:#505050;transform:scaleX(0.7992);">Вс...</span><span class="t" id="t54" style="left:888.8px;top:92.00px;font-size:7.5px;color:#505050;transform:scaleX(0.8732);">Инстр...</span><span class="t" id="t55" style="left:925px;top:92.00px;font-size:7.5px;color:#505050;transform:scaleX(0.8836);">О.</span><span class="t" id="t56" style="left:19px;top:104.00px;font-size:9px;color:#404040;transform:scaleX(0.8208);">Дерево фрагмента</span><span class="t" id="t57" style="left:24px;top:138.00px;font-size:9px;color:#ffffff;transform:scaleX(0.8972);">0</span><span class="t" id="t58" style="left:34.6px;top:138.00px;font-size:9px;color:#333;transform:scaleX(0.8988);">Системный слой</span><span class="t" id="t59" style="left:52px;top:156.00px;font-size:9px;color:#b0b0b0;transform:scaleX(0.9332);">Поиск (Ctrl+/)</span><span class="t" id="t60" style="left:135px;top:177.00px;font-size:9px;color:#333;transform:scaleX(0.9153);">Фрагмент</span><span class="t" id="t61" style="left:135px;top:195.00px;font-size:9px;color:#333;transform:scaleX(0.8674);">Слои (x1)</span><span class="t" id="t62" style="left:561px;top:107.00px;font-size:9px;color:#444;transform:scaleX(0.8571);">СК 0</span><span class="t" id="t63" style="left:657px;top:107.00px;font-size:9px;color:#222;transform:scaleX(0.6978);font-weight:bold;">1</span><span class="t" id="t64" style="left:738px;top:107.00px;font-size:9px;color:#444;transform:scaleX(0.8156);">0.65'</span><span class="t" id="t65" style="left:772.5px;top:107.00px;font-size:9px;color:#444;transform:scaleX(0.9143);">X</span><span class="t" id="t66" style="left:781px;top:107.00px;font-size:9px;color:#444;transform:scaleX(0.8603);">371.740</span><span class="t" id="t67" style="left:811.5px;top:107.00px;font-size:9px;color:#444;transform:scaleX(0.9974);">Y</span><span class="t" id="t68" style="left:821px;top:107.00px;font-size:9px;color:#444;transform:scaleX(0.8558);">-254.30'</span></div>
</body></html>
